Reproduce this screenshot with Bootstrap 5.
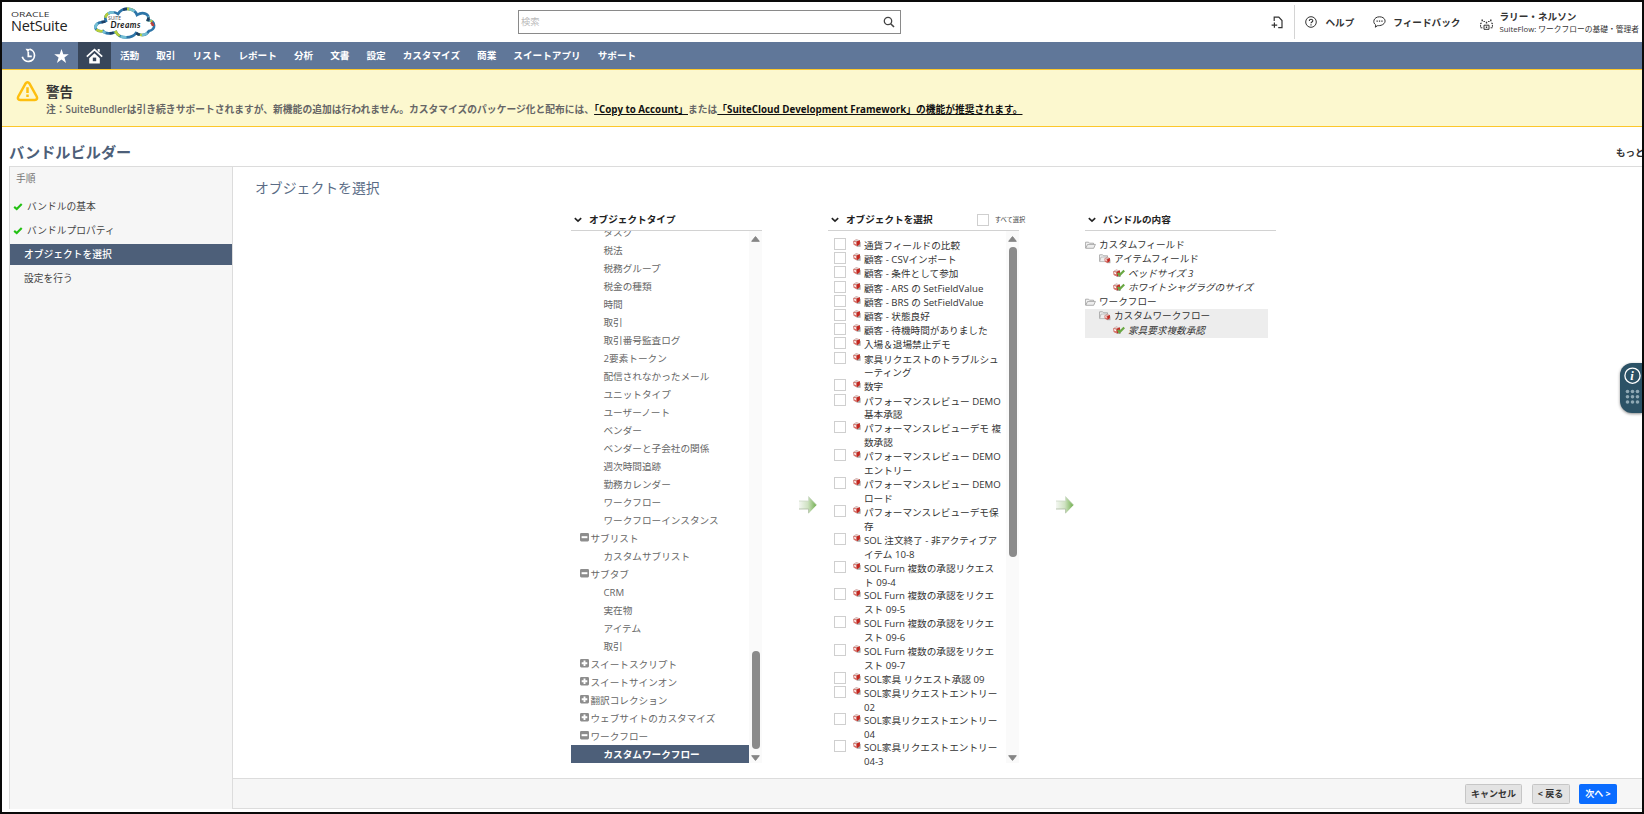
<!DOCTYPE html>
<html lang="ja">
<head>
<meta charset="utf-8">
<meta name="viewport" content="width=device-width, initial-scale=1">
<title>バンドルビルダー</title>
<link href="https://cdn.jsdelivr.net/npm/bootstrap@5.3.0/dist/css/bootstrap.min.css" rel="stylesheet">
<style>
body{font-family:"Open Sans","Noto Sans CJK JP",sans-serif;font-size:9.65px;line-height:14px;color:#333;height:814px;overflow:hidden}
svg{display:block;flex:none}
.frame{height:814px;border:2px solid #0a0a0a;background:#fff}
.topbar{height:40px;padding-left:9px;padding-right:3px}
.brand{width:79px;padding-top:9px}
.brand-top{font-size:6.8px;line-height:7px;letter-spacing:0;color:#333;transform:scaleX(1.52);transform-origin:0 0;font-family:"Open Sans"}
.brand-main{font-size:14.5px;line-height:15px;color:#222;letter-spacing:-.2px}
.search{width:383px;height:24px;border:1px solid #8a8a8a;border-radius:0;margin-left:359px;padding:0 5px 0 2px;color:#bbb;font-size:9.3px}
.tools{font-weight:700;color:#333}
.tools .lbl{padding-top:1px}
.tool-sep{width:1px;height:34px;background:#d4d4d4;margin:0 10px 0 11px}
.user-sub{font-size:7.75px;line-height:12px;font-weight:400;color:#333;white-space:nowrap}
.mainnav{height:27px;background:#607799;padding-left:10px}
.mainnav .nav-ico{width:33px;height:27px}
.mainnav .home{background:#38465a}
.mainnav a{color:#fff;font-weight:700;text-decoration:none;margin-right:17px;padding-top:1px;white-space:nowrap}
.notice{height:58px;background:#fcf8cf;border-top:1px solid #fcc72b;border-bottom:1px solid #fcc72b;padding-left:14px}
.notice h2{font-size:13.5px;line-height:18px;font-weight:700;color:#333;margin:13px 0 0}
.notice p{font-size:9.78px;line-height:14px;margin:2px 0 0;font-weight:600;color:#666;white-space:nowrap}
.notice a{color:#111;font-weight:700}
.title-row{height:39px;padding-left:7px}
.title-row h1{font-size:15.2px;line-height:22px;font-weight:700;color:#4d5f79;margin:14px 0 0}
.more{margin-top:19px;width:26px;overflow:hidden;white-space:nowrap;font-weight:700;font-size:9.5px}
.work{height:643px;margin-left:7px;border-top:1px solid #dcdcdc}
.steps{width:224px;background:#f6f6f6;border-left:1px solid #dcdcdc;border-right:1px solid #dcdcdc;color:#444;font-size:9.75px;flex:none}
.steps .step{height:21px;margin-bottom:3px;padding-left:14px}
.steps .done{padding-left:3px}
.steps .current{background:#4d5f79;color:#fff;font-weight:500}
.steps-title{height:24px;padding-left:6px;color:#777;margin-bottom:5px}
.content-title{font-size:13.85px;line-height:20px;color:#5a6c86;margin:11px 0 0 22px;font-weight:400}
.pickers{margin-left:338px;margin-top:13px;height:565px}
.picker{width:191px;flex:none}
.picker-head{height:20px;border-bottom:1px solid #d2d2d2;padding:0 0 2px 3px;font-weight:700;color:#222;white-space:nowrap}
.picker-head .cap{margin-left:7px}
.between{width:66px;flex:none;padding:285px 0 0 37px}
.scrollbox{height:532px;overflow:hidden}
.sbar{width:13px;height:532px;background:#fafafa;padding:5px 0 2px;flex:none}
.sbar .thumb{width:8px;border-radius:4px;background:#8b8b8b}
.types{width:178px;margin-top:-8px;color:#666}
.types div{height:18px;line-height:20px;padding-left:32.5px;white-space:nowrap}
.types .grp{padding-left:9px;display:flex}
.types .grp svg{margin:4px 1.5px 0 0}
.types .sel{background:#4d5f79;color:#fff;font-weight:700}
.objs{width:178px;padding:7px 0 0 6px;color:#333}
.ob{display:flex;height:14.2px;line-height:13.9px;white-space:nowrap}
.ob.two{height:27.85px}
.ob.tight{height:27px;line-height:13.4px}
.ob i,.ckb{width:12px;height:12px;border:1px solid #cfcfcf;background:#fff;flex:none}
.ob svg{margin:1px 3px 0 7px}
.ob span{padding-top:1px}
.all-label{font-size:6.3px;font-weight:400;color:#444;margin-left:6px}
.bundle{padding-top:7px;color:#333;font-size:9.65px}
.bundle div{height:14.25px;line-height:14.25px;display:flex;white-space:nowrap;align-items:center}
.bundle .l2{padding-left:14px}.bundle .l3{padding-left:28px;font-style:italic}
.bundle svg{margin-right:3px;margin-top:-1px}
.bundle .hl{background:#ededed;width:183px;height:29px;display:block}
.footbar{height:31px;background:#f6f6f6;border-top:1px solid #dcdcdc;border-bottom:1px solid #dcdcdc;padding-right:25px;gap:9.5px}
.footbar .btn{height:20px;font-size:9px;line-height:18px;padding:0;border-radius:1.5px;font-weight:700;background:#e3e3e3;border:1px solid #c6c6c6;color:#333}
.footbar .go{background:#0a6cff;border-color:#0a6cff;color:#fff}
.helper{position:absolute;left:1620px;top:363px;width:22px;height:50px;background:#2c5266;border-radius:12px 0 0 12px;box-shadow:0 1px 3px rgba(0,0,0,.45)}
</style>
</head>
<body>
<svg width="0" height="0" class="position-absolute">
 <defs>
  <linearGradient id="ag" x1="0" x2="1"><stop offset="0" stop-color="#f4f7f2"/><stop offset=".5" stop-color="#cfe2c2"/><stop offset="1" stop-color="#6fae4c"/></linearGradient>
  <symbol id="chev" viewBox="0 0 8 6"><path d="M.8 1.2 4 4.2 7.2 1.2" fill="none" stroke="#222" stroke-width="1.6"/></symbol>
  <symbol id="minus" viewBox="0 0 9 9"><rect width="9" height="8.4" rx="1.3" fill="#8d8d8d"/><rect x="1.6" y="3.2" width="5.8" height="2" fill="#fff"/></symbol>
  <symbol id="plus" viewBox="0 0 9 9"><rect width="9" height="8.4" rx="1.3" fill="#8d8d8d"/><path d="M1.7 4.2h5.6M4.5 1.5v5.4" stroke="#fff" stroke-width="1.9"/></symbol>
  <symbol id="cube" viewBox="0 0 8 8"><path d="M5 1.6 7.6 3V7.800H3.500z" fill="#a8a8a8"/><path d="M.3 2 3.200.2 6.900 1.200 7 5 4 7.300.7 5.800z" fill="#c9867f"/><path d="M3.600 2.500 6.900 1.300 6.800 5 4 7.200z" fill="#c3261f"/><path d="M.4 2.100 3.500 2.700 3.900 7.100.8 5.700z" fill="#d8716a"/><path d="M.8 1.900 3.300.6 6.300 1.300 3.600 2.300z" fill="#ddd0ce"/><path d="M1.100 2.900 2.900 3.300 3.100 5.100 1.400 4.500z" fill="#fff"/></symbol>
  <symbol id="folder" viewBox="0 0 11 8"><path d="M.6 7V1.2h3l.9 1h4v1.2" fill="#f7f7f7" stroke="#9b9b9b" stroke-width=".8"/><path d="M.7 7.3 2.6 3.4h7.8L8.7 7.3z" fill="#eee" stroke="#9b9b9b" stroke-width=".8"/></symbol>
  <symbol id="up" viewBox="0 0 9 6"><path d="M4.5 .6 8.3 5.3H.7z" fill="#858585" stroke="#858585" stroke-width="1" stroke-linejoin="round"/></symbol>
  <symbol id="arrow" viewBox="0 0 18 18"><path d="M0 5h9.6V.6L17.6 9 9.6 17.4V13H0z" fill="url(#ag)"/><path d="M0 5h9.6V.6L17.6 9" fill="none" stroke="#ccd8c5" stroke-width=".8"/><path d="M0 13h9.6v4.2" fill="none" stroke="#a9b9a0" stroke-width=".8"/></symbol>
  <symbol id="fcube" viewBox="0 0 12 10"><path d="M.6 7.4V.8h3l.9 1h4v1.4" fill="#f7f7f7" stroke="#999" stroke-width=".8"/><path d="M.7 7.6 2 3h6v4.6z" fill="#eee" stroke="#aaa" stroke-width=".7"/><use href="#cube" x="5.200" y="2.600" width="6.600" height="7.200"/></symbol>
  <symbol id="cubeok" viewBox="0 0 12 9"><use href="#cube" width="8" height="8.4"/><path d="M4.800 4 6.600 6.200 11.200 1.400" fill="none" stroke="#69a842" stroke-width="2.200"/></symbol>
  <symbol id="ok" viewBox="0 0 11 9"><path d="M1.3 4.9 4.1 7.3 9.6 1.8" fill="none" stroke="#23c113" stroke-width="2.3"/></symbol>
 </defs>
</svg>
<div class="frame d-flex flex-column">
 <header class="topbar d-flex align-items-center">
  <div class="brand align-self-start"><div class="brand-top">ORACLE</div><div class="brand-main">NetSuite</div></div>
  <svg width="69" height="34" viewBox="0 0 69 34" style="margin-top:2px">
   <g fill="none" stroke-width="2.600" stroke-linecap="butt">
    <path d="M13 25C7 26 3 22 7 18 10 15 13 17 16 15 13 8 22 4 28 8 32 1 44 1 47 9 53 5 60 8 58 14 66 15 66 24 59 25 56 30 50 30 46 27 42 33 29 33 26 26 21 28 15 28 13 25Z" stroke="#2d75a8"/>
    <path d="M13 25C7 26 3 22 7 18 10 15 13 17 16 15 13 8 22 4 28 8 32 1 44 1 47 9 53 5 60 8 58 14 66 15 66 24 59 25 56 30 50 30 46 27 42 33 29 33 26 26 21 28 15 28 13 25Z" stroke="#b7cf3a" stroke-dasharray="7 19"/>
    <path d="M13 25C7 26 3 22 7 18 10 15 13 17 16 15 13 8 22 4 28 8 32 1 44 1 47 9 53 5 60 8 58 14 66 15 66 24 59 25 56 30 50 30 46 27 42 33 29 33 26 26 21 28 15 28 13 25Z" stroke="#74bfd4" stroke-dasharray="6 17" stroke-dashoffset="-8"/>
    <path d="M13 25C7 26 3 22 7 18 10 15 13 17 16 15 13 8 22 4 28 8 32 1 44 1 47 9 53 5 60 8 58 14 66 15 66 24 59 25 56 30 50 30 46 27 42 33 29 33 26 26 21 28 15 28 13 25Z" stroke="#1d3f66" stroke-dasharray="4 26" stroke-dashoffset="-18"/>
    <path d="M61 16.500q2 1.500 2 3.500" stroke="#b9403c"/>
   </g>
   <text x="18" y="13.500" font-size="5" fill="#444" textLength="13" font-family="Open Sans">SUITE</text>
   <text x="20.500" y="22" font-size="8.500" font-weight="700" font-style="italic" fill="#1c1c1c" textLength="30" font-family="Lato">Dreams</text>
  </svg>
  <div class="search d-flex align-items-center justify-content-between"><span>検索</span>
   <svg width="12" height="12" viewBox="0 0 12 12" fill="none" stroke="#444"><circle cx="5" cy="5" r="3.700" stroke-width="1.300"/><path d="M7.700 7.700 11 11" stroke-width="1.600"/></svg></div>
  <div class="tools d-flex align-items-center ms-auto">
   <svg width="12" height="13" viewBox="0 0 12 13" fill="none" stroke="#333" stroke-width="1.200"><path d="M3.200 5V1.100h4.600l3.200 3.400v7.200H7.200M3.400 6.400v5.400M.6 9.100h5.600"/></svg>
   <div class="tool-sep"></div>
   <svg width="12" height="12" viewBox="0 0 12 12" fill="none" stroke="#333"><circle cx="6" cy="6" r="5.300"/><path d="M4.300 4.900c0-2.300 3.500-2.200 3.500-.2 0 1.300-1.800 1.200-1.800 2.600M6 8.200v1.200" stroke-width="1.100"/></svg>
   <span class="lbl" style="margin:0 19px 0 8px">ヘルプ</span>
   <svg width="13" height="12" viewBox="0 0 13 12" fill="none" stroke="#333"><path d="M2.300 11.200 2.800 9C-1 6.500.8.800 6.500.800s7.500 5.400 3.200 7.800C7.500 9.900 5.500 9.600 4.700 9.600z"/><path d="M3.500 5.200h1.300M5.900 5.200h1.300M8.300 5.200h1.300" stroke-width="1.300"/></svg>
   <span class="lbl" style="margin:0 19px 0 7px">フィードバック</span>
   <svg width="13" height="12" viewBox="0 0 13 12" fill="none" stroke="#333" style="margin-top:3px"><path d="M2.400 9.800H.6V5.200h1.800M10.600 9.800h1.800V5.200h-1.800" stroke-dasharray="2 .8"/><path d="M4 11.300V7.200h5v4.100z"/><path d="M6.500 3.700v1.700M2.200 1.600v1.700M10.800 1.600v1.700M4.200 3v1M8.800 3v1M6.500 8.600v1.400" stroke-width="1.400"/></svg>
   <div style="margin-left:7px;padding-top:1px"><div style="line-height:12px">ラリー・ネルソン</div><div class="user-sub">SuiteFlow: ワークフローの基礎・管理者</div></div>
  </div>
 </header>
 <nav class="mainnav d-flex align-items-center">
  <span class="nav-ico d-flex align-items-center justify-content-center"><svg width="15" height="15" viewBox="0 0 15 15" fill="none" stroke="#fff" stroke-width="1.700"><path d="M8.500 1.200a6.200 6.200 0 1 1-7.200 7.600M7.300 4v4.300h3.500"/><path d="M4.500.8 9 .9 7 4.400z" fill="#fff" stroke="none"/></svg></span>
  <span class="nav-ico d-flex align-items-center justify-content-center"><svg width="15" height="14" viewBox="0 0 15 14" fill="#fff"><path d="m7.500 0 1.800 5.200h5.500l-4.400 3.300 1.700 5.400-4.600-3.300-4.600 3.300 1.700-5.400L.2 5.200h5.500z"/></svg></span>
  <span class="nav-ico home d-flex align-items-center justify-content-center" style="margin-right:9px"><svg width="17" height="16" viewBox="0 0 17 16"><path d="M.8 8.600 8.500 1.700l7.700 6.900" fill="none" stroke="#fff" stroke-width="1.700"/><path d="M11.700 1h2v3.600l-2-1.700zM3.200 10.200 8.500 5.300 13.800 10.200v5.300H3.200z" fill="#fff"/><path d="M6.800 9.600h3.400v3.600H6.800z" fill="#38465a"/></svg></span>
  <a href="#">活動</a><a href="#">取引</a><a href="#">リスト</a><a href="#">レポート</a><a href="#">分析</a><a href="#">文書</a><a href="#">設定</a><a href="#">カスタマイズ</a><a href="#">商業</a><a href="#">スイートアプリ</a><a href="#">サポート</a>
 </nav>
 <section class="notice d-flex">
  <svg width="23" height="22" viewBox="0 0 23 22" style="margin-top:10px;margin-right:7px"><path d="M11.500 2.200c.9 0 1.400.5 1.900 1.300l7.300 13c1 2 .2 3.400-1.800 3.400H4.100c-2 0-2.800-1.400-1.800-3.400l7.300-13c.5-.8 1-1.300 1.900-1.300z" fill="none" stroke="#fdbf10" stroke-width="2.500"/><path d="M11.500 7.300v5.600M11.500 14.400V17" stroke="#fdbf10" stroke-width="2.500"/></svg>
  <div><h2>警告</h2><p>注：SuiteBundlerは引き続きサポートされますが、新機能の追加は行われません。カスタマイズのパッケージ化と配布には、<a href="#">「Copy to Account」</a>または<a href="#">「SuiteCloud Development Framework」の機能が推奨されます。</a></p></div>
 </section>
 <div class="title-row d-flex justify-content-between"><h1>バンドルビルダー</h1><div class="more">もっと</div></div>
 <div class="work d-flex">
  <aside class="steps">
   <div class="steps-title d-flex align-items-center">手順</div>
   <div class="step done d-flex align-items-center"><svg class="me-1" width="10" height="9"><use href="#ok"/></svg>バンドルの基本</div>
   <div class="step done d-flex align-items-center"><svg class="me-1" width="10" height="9"><use href="#ok"/></svg>バンドルプロパティ</div>
   <div class="step current d-flex align-items-center">オブジェクトを選択</div>
   <div class="step d-flex align-items-center">設定を行う</div>
  </aside>
  <main class="flex-grow-1 d-flex flex-column">
   <h3 class="content-title">オブジェクトを選択</h3>
   <div class="pickers d-flex">
    <section class="picker">
     <div class="picker-head d-flex align-items-center"><svg width="8" height="6"><use href="#chev"/></svg><span class="cap">オブジェクトタイプ</span></div>
     <div class="scrollbox d-flex">
      <div class="types">
       <div>タスク</div><div>税法</div><div>税務グループ</div><div>税金の種類</div><div>時間</div><div>取引</div><div>取引番号監査ログ</div><div>2要素トークン</div><div>配信されなかったメール</div><div>ユニットタイプ</div><div>ユーザーノート</div><div>ベンダー</div><div>ベンダーと子会社の関係</div><div>週次時間追跡</div><div>勤務カレンダー</div><div>ワークフロー</div><div>ワークフローインスタンス</div>
       <div class="grp"><svg width="9" height="9"><use href="#minus"/></svg>サブリスト</div>
       <div>カスタムサブリスト</div>
       <div class="grp"><svg width="9" height="9"><use href="#minus"/></svg>サブタブ</div>
       <div>CRM</div><div>実在物</div><div>アイテム</div><div>取引</div>
       <div class="grp"><svg width="9" height="9"><use href="#plus"/></svg>スイートスクリプト</div>
       <div class="grp"><svg width="9" height="9"><use href="#plus"/></svg>スイートサインオン</div>
       <div class="grp"><svg width="9" height="9"><use href="#plus"/></svg>翻訳コレクション</div>
       <div class="grp"><svg width="9" height="9"><use href="#plus"/></svg>ウェブサイトのカスタマイズ</div>
       <div class="grp"><svg width="9" height="9"><use href="#minus"/></svg>ワークフロー</div>
       <div class="sel">カスタムワークフロー</div>
      </div>
      <div class="sbar d-flex flex-column align-items-center"><svg width="9" height="6"><use href="#up"/></svg><div class="thumb mt-auto" style="height:98px"></div><svg width="9" height="6" style="transform:rotate(180deg);margin-top:6px"><use href="#up"/></svg></div>
     </div>
    </section>
    <div class="between"><svg width="18" height="18"><use href="#arrow"/></svg></div>
    <section class="picker">
     <div class="picker-head d-flex align-items-center"><svg width="8" height="6"><use href="#chev"/></svg><span class="cap">オブジェクトを選択</span><span class="ckb" style="margin-left:44px"></span><span class="all-label">すべて選択</span></div>
     <div class="scrollbox d-flex overflow-visible">
      <div class="objs">
       <div class="ob"><i></i><svg width="8" height="8"><use href="#cube"/></svg><span>通貨フィールドの比較</span></div>
       <div class="ob"><i></i><svg width="8" height="8"><use href="#cube"/></svg><span>顧客 - CSVインポート</span></div>
       <div class="ob"><i></i><svg width="8" height="8"><use href="#cube"/></svg><span>顧客 - 条件として参加</span></div>
       <div class="ob"><i></i><svg width="8" height="8"><use href="#cube"/></svg><span>顧客 - ARS の SetFieldValue</span></div>
       <div class="ob"><i></i><svg width="8" height="8"><use href="#cube"/></svg><span>顧客 - BRS の SetFieldValue</span></div>
       <div class="ob"><i></i><svg width="8" height="8"><use href="#cube"/></svg><span>顧客 - 状態良好</span></div>
       <div class="ob"><i></i><svg width="8" height="8"><use href="#cube"/></svg><span>顧客 - 待機時間がありました</span></div>
       <div class="ob"><i></i><svg width="8" height="8"><use href="#cube"/></svg><span>入場＆退場禁止デモ</span></div>
       <div class="ob two"><i></i><svg width="8" height="8"><use href="#cube"/></svg><span>家具リクエストのトラブルシュ<br>ーティング</span></div>
       <div class="ob"><i></i><svg width="8" height="8"><use href="#cube"/></svg><span>数字</span></div>
       <div class="ob two"><i></i><svg width="8" height="8"><use href="#cube"/></svg><span>パフォーマンスレビュー DEMO<br>基本承認</span></div>
       <div class="ob two"><i></i><svg width="8" height="8"><use href="#cube"/></svg><span>パフォーマンスレビューデモ 複<br>数承認</span></div>
       <div class="ob two"><i></i><svg width="8" height="8"><use href="#cube"/></svg><span>パフォーマンスレビュー DEMO<br>エントリー</span></div>
       <div class="ob two"><i></i><svg width="8" height="8"><use href="#cube"/></svg><span>パフォーマンスレビュー DEMO<br>ロード</span></div>
       <div class="ob two"><i></i><svg width="8" height="8"><use href="#cube"/></svg><span>パフォーマンスレビューデモ保<br>存</span></div>
       <div class="ob two"><i></i><svg width="8" height="8"><use href="#cube"/></svg><span>SOL 注文終了 - 非アクティブア<br>イテム 10-8</span></div>
       <div class="ob two"><i></i><svg width="8" height="8"><use href="#cube"/></svg><span>SOL Furn 複数の承認リクエス<br>ト 09-4</span></div>
       <div class="ob two"><i></i><svg width="8" height="8"><use href="#cube"/></svg><span>SOL Furn 複数の承認をリクエ<br>スト 09-5</span></div>
       <div class="ob two"><i></i><svg width="8" height="8"><use href="#cube"/></svg><span>SOL Furn 複数の承認をリクエ<br>スト 09-6</span></div>
       <div class="ob two"><i></i><svg width="8" height="8"><use href="#cube"/></svg><span>SOL Furn 複数の承認をリクエ<br>スト 09-7</span></div>
       <div class="ob"><i></i><svg width="8" height="8"><use href="#cube"/></svg><span>SOL家具 リクエスト承認 09</span></div>
       <div class="ob tight"><i></i><svg width="8" height="8"><use href="#cube"/></svg><span>SOL家具リクエストエントリー<br>02</span></div>
       <div class="ob tight"><i></i><svg width="8" height="8"><use href="#cube"/></svg><span>SOL家具リクエストエントリー<br>04</span></div>
       <div class="ob tight"><i></i><svg width="8" height="8"><use href="#cube"/></svg><span>SOL家具リクエストエントリー<br>04-3</span></div>
      </div>
      <div class="sbar d-flex flex-column align-items-center"><svg width="9" height="6"><use href="#up"/></svg><div class="thumb" style="height:310px;margin-top:5px"></div><svg class="mt-auto" width="9" height="6" style="transform:rotate(180deg)"><use href="#up"/></svg></div>
     </div>
    </section>
    <div class="between"><svg width="18" height="18"><use href="#arrow"/></svg></div>
    <section class="picker">
     <div class="picker-head d-flex align-items-center"><svg width="8" height="6"><use href="#chev"/></svg><span class="cap">バンドルの内容</span></div>
     <div class="bundle">
      <div><svg width="11" height="8"><use href="#folder"/></svg>カスタムフィールド</div>
      <div class="l2"><svg width="12" height="10"><use href="#fcube"/></svg>アイテムフィールド</div>
      <div class="l3"><svg width="12" height="9"><use href="#cubeok"/></svg>ベッドサイズ 3</div>
      <div class="l3"><svg width="12" height="9"><use href="#cubeok"/></svg>ホワイトシャグラグのサイズ</div>
      <div><svg width="11" height="8"><use href="#folder"/></svg>ワークフロー</div>
      <div class="hl"><div class="l2"><svg width="12" height="10"><use href="#fcube"/></svg>カスタムワークフロー</div>
      <div class="l3"><svg width="12" height="9"><use href="#cubeok"/></svg>家具要求複数承認</div></div>
     </div>
    </section>
   </div>
   <footer class="footbar d-flex align-items-center justify-content-end mt-auto">
    <button class="btn" style="width:57px">キャンセル</button><button class="btn" style="width:38px">&lt; 戻る</button><button class="btn go" style="width:38px">次へ &gt;</button>
   </footer>
  </main>
 </div>
</div>
<aside class="helper"><svg width="22" height="50" viewBox="0 0 22 50"><circle cx="12.500" cy="12.700" r="7.600" fill="none" stroke="#fff" stroke-width="1.300"/><text x="10.300" y="17" font-family="Liberation Serif" font-size="12.500" font-weight="700" font-style="italic" fill="#fff">i</text><g fill="#8fa8b4"><circle cx="7.500" cy="28.500" r="1.800"/><circle cx="12.500" cy="28.500" r="1.800"/><circle cx="17.500" cy="28.500" r="1.800"/><circle cx="7.500" cy="33.800" r="1.800"/><circle cx="12.500" cy="33.800" r="1.800"/><circle cx="17.500" cy="33.800" r="1.800"/><circle cx="7.500" cy="39" r="1.800"/><circle cx="12.500" cy="39" r="1.800"/><circle cx="17.500" cy="39" r="1.800"/></g></svg></aside>
<script src="https://cdn.jsdelivr.net/npm/bootstrap@5.3.0/dist/js/bootstrap.bundle.min.js"></script>
</body>
</html>
